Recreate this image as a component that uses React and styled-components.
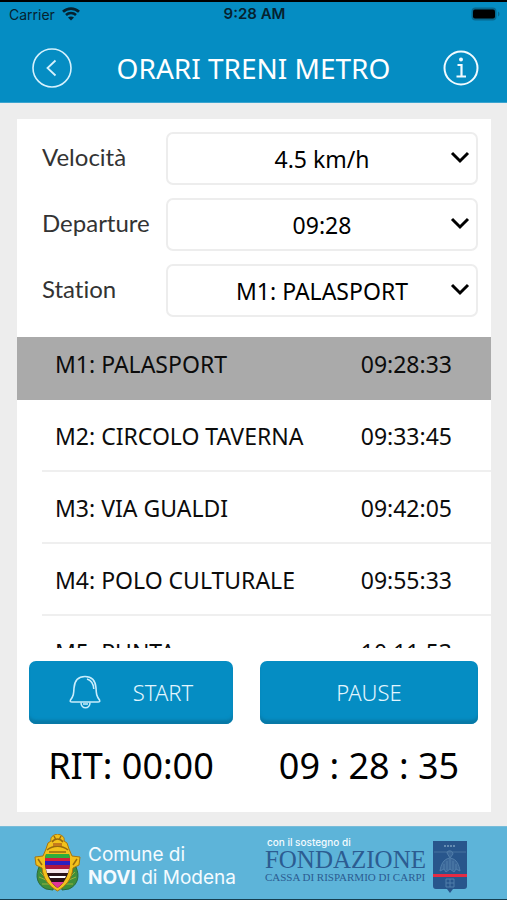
import React, { useState } from "react";
import styled, { createGlobalStyle } from "styled-components";

const GlobalStyle = createGlobalStyle`
  * {
    box-sizing: border-box;
  }

  body {
    margin: 0;
    background: #ededed;
    color: #0c0c0c;
    font-family: "Noto Sans", "Open Sans", sans-serif;
  }
`;

const Page = styled.div`
  display: flex;
  flex-direction: column;
  min-height: 100vh;
`;

const Header = styled.header`
  background: #058dc3;
  border-top: 2px solid #000;
  border-bottom: 1px solid #3ba4cf;
`;

const StatusBar = styled.div`
  display: grid;
  grid-template-columns: 1fr auto 1fr;
  align-items: center;
  height: 24px;
  padding: 0 7px 0 9px;
  color: #06222f;
  font-family: Inter, sans-serif;
  font-size: 14px;
`;

const Carrier = styled.span`
  display: flex;
  align-items: center;
  gap: 7px;
`;

const Clock = styled.span`
  font-size: 15px;
  font-weight: 600;
  line-height: 20px;
`;

const Battery = styled.svg`
  justify-self: end;
`;

const TitleBar = styled.div`
  display: grid;
  grid-template-columns: 44px 1fr 44px;
  align-items: center;
  height: 76px;
  padding: 8px 28px 0;
`;

const Title = styled.h1`
  margin: 0;
  color: #fff;
  font-size: 28px;
  font-weight: 400;
  line-height: 36px;
  text-align: center;
`;

const IconButton = styled.button`
  display: flex;
  justify-content: flex-end;
  padding: 0;
  border: 0;
  background: none;
  cursor: pointer;
`;

const Card = styled.main`
  flex: 1;
  display: flex;
  flex-direction: column;
  margin: 16px 16px 14px 17px;
  background: #fff;
`;

const Form = styled.form`
  display: grid;
  gap: 13px;
  padding: 13px 13px 20px 25px;
`;

const Field = styled.div`
  display: grid;
  grid-template-columns: 124px 1fr;
  align-items: center;
`;

const Label = styled.label`
  padding-bottom: 4px;
  color: #333;
  font-family: Lato, sans-serif;
  font-size: 24px;
  font-variant-ligatures: none;
  line-height: 30px;
`;

const SelectBox = styled.div`
  position: relative;
`;

const Select = styled.select`
  display: block;
  width: 100%;
  height: 53px;
  padding: 0;
  border: 2px solid #ededed;
  border-radius: 7px;
  background: #fff;
  color: #000;
  font-family: inherit;
  font-size: 23px;
  text-align: center;
  text-align-last: center;
  appearance: none;
`;

const Chevron = styled.svg`
  position: absolute;
  top: 18px;
  right: 8px;
  pointer-events: none;
`;

const Stops = styled.ul`
  height: 311px;
  margin: 0;
  padding: 0;
  overflow-y: auto;
  scrollbar-width: none;
  list-style: none;
`;

const Stop = styled.li`
  height: ${({ $active }) => ($active ? "63px" : "72px")};
  padding-left: 25px;
  background: ${({ $active }) => ($active ? "#aaa" : "transparent")};
`;

const StopLine = styled.div`
  display: flex;
  align-items: center;
  justify-content: space-between;
  height: 100%;
  padding: ${({ $active }) => ($active ? "0 39px 9px 13px" : "2px 39px 0 13px")};
  border-bottom: ${({ $active }) => ($active ? "0" : "2px solid #efefef")};
  font-size: 23px;
  line-height: 30px;
`;

const Panel = styled.section`
  display: grid;
  grid-template-columns: 204fr 218fr;
  column-gap: 27px;
  row-gap: 22px;
  padding: 13px 13px 0 12px;
`;

const ActionButton = styled.button`
  display: flex;
  align-items: center;
  justify-content: center;
  gap: 32px;
  height: 63px;
  padding: 0 0 2px;
  border: 0;
  border-radius: 7px;
  background: #058dc3;
  box-shadow: inset 0 -5px 3px -1px #0879a6;
  color: #e2f6ff;
  font-family: inherit;
  font-size: 22px;
  font-weight: 300;
  cursor: pointer;
`;

const Counter = styled.output`
  color: #000;
  font-size: 36px;
  line-height: 40px;
  text-align: center;
  white-space: pre;
`;

const Footer = styled.footer`
  display: flex;
  align-items: center;
  height: 74px;
  padding: 0 40px 0 34px;
  border-top: 1px solid #78bcd9;
  border-bottom: 1px solid #153e50;
  background: #5db4d9;
`;

const Town = styled.div`
  margin-left: 7px;
  padding-top: 5px;
  color: #f4fbff;
  font-family: Inter, sans-serif;
  font-size: 19px;
  line-height: 23px;
  white-space: nowrap;
`;

const Foundation = styled.div`
  margin-left: auto;
  padding-bottom: 8px;
  color: #2c5c91;
  font-family: "Liberation Serif", serif;
  white-space: nowrap;
`;

const Support = styled.div`
  padding-left: 2px;
  color: #f4fbff;
  font-family: Inter, sans-serif;
  font-size: 10px;
  font-weight: 500;
  line-height: 14px;
`;

const FoundationName = styled.div`
  font-size: 25px;
  line-height: 22px;
`;

const FoundationBank = styled.div`
  font-size: 11px;
  line-height: 12px;
`;

const Shield = styled.svg`
  margin-top: 8px;
  margin-left: 7px;
`;

const stations = [
  { name: "M1: PALASPORT", time: "09:28:33" },
  { name: "M2: CIRCOLO TAVERNA", time: "09:33:45" },
  { name: "M3: VIA GUALDI", time: "09:42:05" },
  { name: "M4: POLO CULTURALE", time: "09:55:33" },
  { name: "M5: PUNTA", time: "10:11:53" },
];

const WifiIcon = () => (
  <svg width="18" height="14" viewBox="0 0 18 14" fill="none" stroke="#06222f">
    <path d="M1 4.800C5.500 .5 12.500 .5 17 4.800" strokeWidth="2.700" />
    <path d="M4 8C6.800 5.300 11.200 5.300 14 8" strokeWidth="2.500" />
    <path d="M9 13.500L6 10.500C7.700 9 10.300 9 12 10.500Z" fill="#06222f" stroke="none" />
  </svg>
);

const BatteryIcon = () => (
  <Battery width="29" height="14" viewBox="0 0 29 14">
    <rect x=".5" y=".5" width="25" height="13" rx="4" fill="#07688f" />
    <rect x="2" y="2.500" width="22" height="9" rx="2" fill="#000" />
    <path d="M27 4.500C29 5.500 29 8.500 27 9.500Z" fill="#07688f" />
  </Battery>
);

const BackIcon = () => (
  <svg width="40" height="40" viewBox="0 0 40 40" fill="none" stroke="#d5f1fd">
    <circle cx="20" cy="20" r="19" strokeWidth="1.600" />
    <path d="M23.500 12.500L15.500 20L23.500 27.500" strokeWidth="1.800" />
  </svg>
);

const InfoIcon = () => (
  <svg width="36" height="36" viewBox="0 0 36 36" fill="none" stroke="#f1fbff">
    <circle cx="18" cy="18" r="16.500" strokeWidth="2" />
    <path d="M14.500 15H18.500V26.500M13.500 26.500H23" strokeWidth="2.200" />
    <circle cx="18" cy="9.500" r="2" fill="#f1fbff" stroke="none" />
  </svg>
);

const BellIcon = () => (
  <svg width="32" height="34" viewBox="0 0 32 34" fill="none" stroke="#c9edfc" strokeWidth="1.600">
    <path d="M16 1.500C9 1.500 5.500 6.500 5 13C4.700 19 4.500 21 1.500 25C.8 26.500 1.500 27 3 27H29C30.500 27 31.200 26.500 30.500 25C27.500 21 27.300 19 27 13C26.500 6.500 23 1.500 16 1.500Z" />
    <path d="M18 4C22.500 5.500 24.500 9 24.800 14" />
    <path d="M12 27.500C12 34.500 21 34.500 21 27.500M14 29H19" />
  </svg>
);

const Crest = () => (
  <svg width="47" height="58" viewBox="0 0 47 58">
    <path d="M5 33C1 42 3 51 12 55L19 56L20 51C12 47 9 42 8 34ZM42 33C46 42 44 51 35 55L28 56L27 51C35 47 38 42 39 34Z" fill="#3f8f3a" stroke="#2b6a3a" />
    <path d="M6 38L10 42M5 43L12 46M8 50L15 50M41 38L37 42M42 43L35 46M39 50L32 50" stroke="#9bb23a" />
    <path d="M12 15L14 9L17 7C16 3 19 1 23.500 0C28 1 31 3 30 7L33 9L35 15L38 22L46 23L45 31L39 34C38 45 32 52 23.500 57C15 52 9 45 8 34L2 31L1 23L9 22Z" fill="#f2c11c" stroke="#a8760f" />
    <path d="M12 20H35C36 24 36 32 35 36C33 44 29 50 23.500 54C18 50 14 44 12 36C11 32 11 24 12 20Z" fill="#2b1418" />
    <path d="M12 20H35L36 24H11Z" fill="#2fae3c" />
    <path d="M11 24H36V27H11Z" fill="#d3203c" />
    <path d="M11 27H36V31H11Z" fill="#2a1fc0" />
    <path d="M11 31H36L35 35H12Z" fill="#b01840" />
    <path d="M12 35H35L34 39H13Z" fill="#f6e6ea" />
    <path d="M15 42H32L31 44H16Z" fill="#fff" />
    <path d="M17 48H30L23.500 54Z" fill="#e0359a" />
    <path d="M13 16C19 11 28 11 34 16M18 8C21 4 26 4 29 8M15 18H32M20 2L22 6M27 2L25 6M4 25L8 31M43 25L39 31" fill="none" stroke="#96690e" strokeWidth="1.500" />
    <path d="M19 9H28V12H19Z" fill="#c47a1c" />
  </svg>
);

const FoundationShield = () => (
  <Shield width="34" height="52" viewBox="0 0 34 52">
    <path d="M0 0H34V45Q34 48 31 48H20L17 52L14 48H3Q0 48 0 45Z" fill="#28568c" />
    <path d="M1 11H33" stroke="#46729f" />
    <path d="M11 5H23" stroke="#658cb2" strokeWidth="2" strokeDasharray="2 1" />
    <g fill="none" stroke="#6390b8" opacity=".7">
      <path d="M14 12C14 9 20 9 20 13L17 17ZM17 17C10 18 8 24 7 30L11 28L13 31L17 28L21 31L23 28L27 30C26 24 24 18 17 17Z" fill="#426e9e" />
      <path d="M11 23V28M14 20V29M17 18V28M20 20V29M23 23V28" />
      <path d="M13 38H21V46H13ZM13 42H21M17 38V46" />
    </g>
    <path d="M0 34.500H34" stroke="#e52b43" strokeWidth="3" />
  </Shield>
);

const SelectField = ({ id, label, options }) => (
  <Field>
    <Label htmlFor={id}>{label}</Label>
    <SelectBox>
      <Select id={id}>
        {options.map((option) => (
          <option key={option}>{option}</option>
        ))}
      </Select>
      <Chevron width="20" height="16" viewBox="0 0 20 16" fill="none">
        <path d="M2 3L10 11L18 3" stroke="#000" strokeWidth="3" />
      </Chevron>
    </SelectBox>
  </Field>
);

const App = () => {
  const [active, setActive] = useState(0);

  return (
    <Page>
      <GlobalStyle />
      <Header>
        <StatusBar>
          <Carrier>
            Carrier
            <WifiIcon />
          </Carrier>
          <Clock>9:28 AM</Clock>
          <BatteryIcon />
        </StatusBar>
        <TitleBar>
          <IconButton aria-label="Back">
            <BackIcon />
          </IconButton>
          <Title>ORARI TRENI METRO</Title>
          <IconButton aria-label="Info">
            <InfoIcon />
          </IconButton>
        </TitleBar>
      </Header>

      <Card>
        <Form>
          <SelectField id="speed" label="Velocità" options={["4.5 km/h"]} />
          <SelectField id="departure" label="Departure" options={["09:28"]} />
          <SelectField
            id="station"
            label="Station"
            options={stations.map((station) => station.name)}
          />
        </Form>

        <Stops>
          {stations.map((station, index) => (
            <Stop
              key={station.name}
              $active={index === active}
              onClick={() => setActive(index)}
            >
              <StopLine $active={index === active}>
                <span>{station.name}</span>
                <time>{station.time}</time>
              </StopLine>
            </Stop>
          ))}
        </Stops>

        <Panel>
          <ActionButton type="button">
            <BellIcon />
            START
          </ActionButton>
          <ActionButton type="button">PAUSE</ActionButton>
          <Counter>RIT: 00:00</Counter>
          <Counter>09 : 28 : 35</Counter>
        </Panel>
      </Card>

      <Footer>
        <Crest />
        <Town>
          Comune di
          <br />
          <strong>NOVI</strong> di Modena
        </Town>
        <Foundation>
          <Support>con il sostegno di</Support>
          <FoundationName>FONDAZIONE</FoundationName>
          <FoundationBank>CASSA DI RISPARMIO DI CARPI</FoundationBank>
        </Foundation>
        <FoundationShield />
      </Footer>
    </Page>
  );
};

export default App;
